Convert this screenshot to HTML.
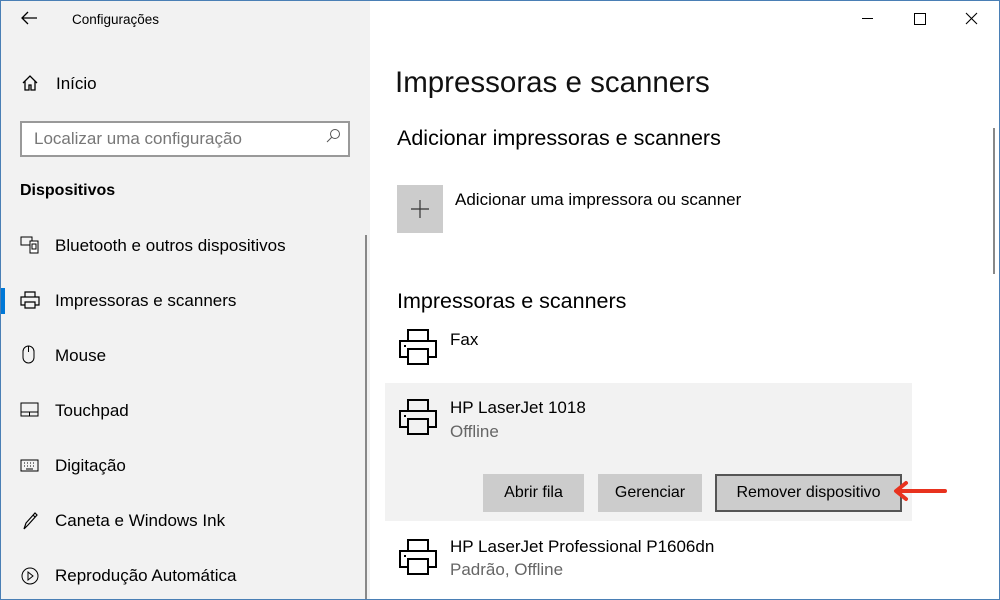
<!DOCTYPE html>
<html><head><meta charset="utf-8"><style>
body{margin:0;width:1000px;height:600px;overflow:hidden;font-family:"Liberation Sans",sans-serif;color:#000;background:#fff;position:relative}
.a{position:absolute;white-space:nowrap}
#side{position:absolute;left:0;top:0;width:370px;height:600px;background:#f2f2f2}
.ic{position:absolute}
.si{font-size:17px;left:55px}
.btn{position:absolute;background:#ccc;font-size:16px;text-align:center;line-height:38px;height:38px;top:474px}
</style></head><body>
<div id="side">
<svg class="ic" style="left:20px;top:10px" width="18" height="16"><path d="M17 8H2M8 2L2 8l6 6" stroke="#000" stroke-width="1.3" fill="none"/></svg>
<div class="a" style="left:72px;top:12px;font-size:13.5px">Configurações</div>
<svg class="ic" style="left:21px;top:74px" width="18" height="18"><path d="M2 9L9 2l7 7M4 7v9h4v-5h2v5h4V7" stroke="#000" stroke-width="1.3" fill="none"/></svg>
<div class="a" style="left:56px;top:74px;font-size:17px">Início</div>
<div class="a" style="left:20px;top:121px;width:326px;height:32px;border:2px solid #999;background:#fff"></div>
<div class="a" style="left:34px;top:129px;font-size:17px;color:#777">Localizar uma configuração</div>
<svg class="ic" style="left:325px;top:128px" width="16" height="16"><circle cx="10" cy="6" r="4.5" stroke="#555" fill="none"/><path d="M7 9L2 14" stroke="#555"/></svg>
<div class="a" style="left:20px;top:182px;font-size:16px;font-weight:bold">Dispositivos</div>
<svg class="ic" style="left:20px;top:236px" width="20" height="18"><rect x="1" y="1" width="11" height="8" stroke="#000" fill="none"/><rect x="10" y="5" width="8" height="12" stroke="#000" fill="#fff"/><rect x="12" y="8" width="4" height="5" stroke="#000" fill="none"/></svg>
<div class="a si" style="top:236px">Bluetooth e outros dispositivos</div>
<div class="a" style="left:0;top:288px;width:5px;height:26px;background:#0078d7"></div>
<svg class="ic" style="left:20px;top:291px" width="20" height="18"><path d="M5 6V1h10v5M5 14H1V6h18v8h-4M5 11h10v6H5z" stroke="#000" stroke-width="1.2" fill="none"/></svg>
<div class="a si" style="top:291px">Impressoras e scanners</div>
<svg class="ic" style="left:21px;top:345px" width="16" height="20"><rect x="2" y="1" width="11" height="17" rx="5.5" stroke="#000" fill="none"/><path d="M7.5 1v6" stroke="#000"/></svg>
<div class="a si" style="top:346px">Mouse</div>
<svg class="ic" style="left:20px;top:402px" width="20" height="16"><rect x="1" y="1" width="17" height="13" stroke="#000" fill="none"/><path d="M1 10h17M9.5 10v4" stroke="#000"/></svg>
<div class="a si" style="top:401px">Touchpad</div>
<svg class="ic" style="left:20px;top:458px" width="20" height="16"><rect x="1" y="2" width="17" height="11" stroke="#000" fill="none"/><path d="M4 5h1M7 5h1M10 5h1M13 5h1M4 8h1M7 8h1M10 8h1M13 8h1M6 11h7" stroke="#000"/></svg>
<div class="a si" style="top:456px">Digitação</div>
<svg class="ic" style="left:21px;top:511px" width="18" height="20"><path d="M3 18l2-6 9-10 2 2-9 10zM12 4l2 2" stroke="#000" stroke-width="1.2" fill="none"/></svg>
<div class="a si" style="top:511px">Caneta e Windows Ink</div>
<svg class="ic" style="left:20px;top:566px" width="20" height="20"><circle cx="10" cy="10" r="8" stroke="#000" fill="none"/><path d="M8 6l5 4-5 4z" stroke="#000" fill="none"/></svg>
<div class="a si" style="top:566px">Reprodução Automática</div>
<div class="a" style="left:365px;top:235px;width:2px;height:365px;background:#888"></div>
</div>
<div class="a" style="left:862px;top:18px;width:11px;height:1px;background:#000"></div>
<div class="a" style="left:914px;top:13px;width:10px;height:10px;border:1px solid #000"></div>
<svg class="ic" style="left:965px;top:12px" width="13" height="13"><path d="M1 1l11 11M12 1L1 12" stroke="#000" stroke-width="1.1"/></svg>
<div class="a" style="left:993px;top:128px;width:2px;height:146px;background:#888"></div>
<div class="a" style="left:395px;top:66px;font-size:29.5px;color:#111">Impressoras e scanners</div>
<div class="a" style="left:397px;top:126px;font-size:21.5px">Adicionar impressoras e scanners</div>
<div class="a" style="left:397px;top:185px;width:46px;height:48px;background:#ccc"></div>
<svg class="ic" style="left:410px;top:199px" width="20" height="20"><path d="M10 1v18M1 10h18" stroke="#333" stroke-width="1.2"/></svg>
<div class="a" style="left:455px;top:190px;font-size:17px">Adicionar uma impressora ou scanner</div>
<div class="a" style="left:397px;top:289px;font-size:21.5px">Impressoras e scanners</div>
<svg class="ic" style="left:398px;top:328px" width="40" height="38"><path d="M10 12V2h20v10M9 29H2V13h36v16h-7M10 21h20v15H10z" stroke="#000" stroke-width="2" fill="none"/><path d="M6 18h2" stroke="#000" stroke-width="2"/></svg>
<div class="a" style="left:450px;top:330px;font-size:17px">Fax</div>
<div class="a" style="left:385px;top:383px;width:527px;height:138px;background:#f2f2f2"></div>
<svg class="ic" style="left:398px;top:398px" width="40" height="38"><path d="M10 12V2h20v10M9 29H2V13h36v16h-7M10 21h20v15H10z" stroke="#000" stroke-width="2" fill="none"/><path d="M6 18h2" stroke="#000" stroke-width="2"/></svg>
<div class="a" style="left:450px;top:398px;font-size:17px">HP LaserJet 1018</div>
<div class="a" style="left:450px;top:422px;font-size:17px;color:#666">Offline</div>
<div class="btn" style="left:483px;width:101px">Abrir fila</div>
<div class="btn" style="left:598px;width:104px">Gerenciar</div>
<div class="btn" style="left:715px;width:183px;height:34px;line-height:34px;border:2px solid #555">Remover dispositivo</div>
<svg class="ic" style="left:888px;top:480px" width="60" height="24"><path d="M57 11H12" stroke="#e8321e" stroke-width="4" stroke-linecap="round"/><path d="M18 3l-10 8 10 8" stroke="#e8321e" stroke-width="4" fill="none" stroke-linecap="round" stroke-linejoin="round"/></svg>
<svg class="ic" style="left:398px;top:538px" width="40" height="38"><path d="M10 12V2h20v10M9 29H2V13h36v16h-7M10 21h20v15H10z" stroke="#000" stroke-width="2" fill="none"/><path d="M6 18h2" stroke="#000" stroke-width="2"/></svg>
<div class="a" style="left:450px;top:537px;font-size:17px">HP LaserJet Professional P1606dn</div>
<div class="a" style="left:450px;top:560px;font-size:17px;color:#666">Padrão, Offline</div>
<div class="a" style="left:0;top:0;width:998px;height:598px;border:1px solid #4a7fb5"></div>
</body></html>
